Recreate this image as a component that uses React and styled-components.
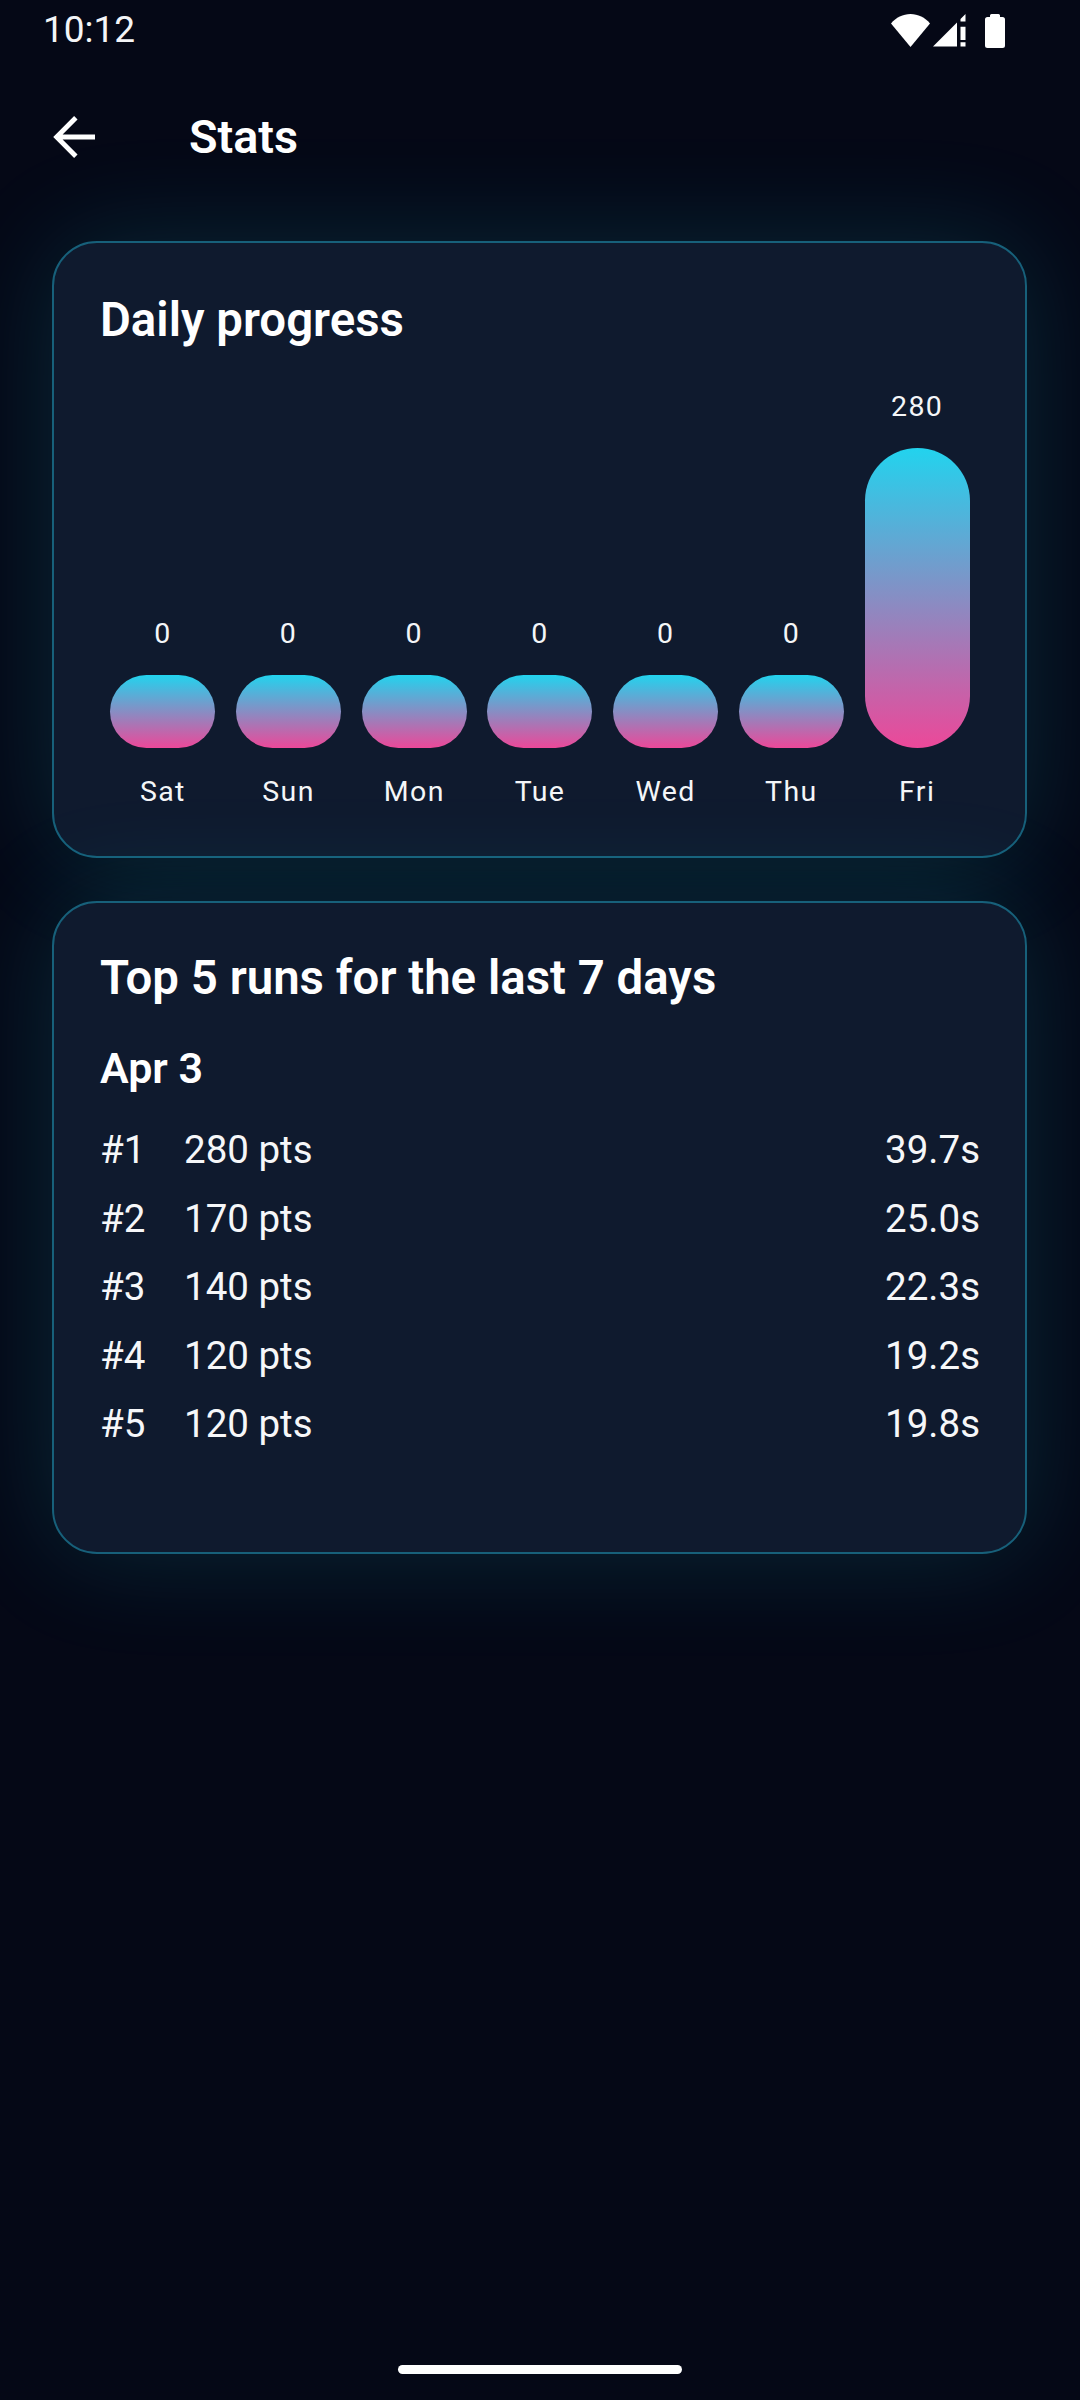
import React from "react";
import styled, { createGlobalStyle } from "styled-components";

const days = [
  { day: "Sat", value: 0 },
  { day: "Sun", value: 0 },
  { day: "Mon", value: 0 },
  { day: "Tue", value: 0 },
  { day: "Wed", value: 0 },
  { day: "Thu", value: 0 },
  { day: "Fri", value: 280 },
];

const runs = [
  { rank: "#1", pts: "280 pts", time: "39.7s" },
  { rank: "#2", pts: "170 pts", time: "25.0s" },
  { rank: "#3", pts: "140 pts", time: "22.3s" },
  { rank: "#4", pts: "120 pts", time: "19.2s" },
  { rank: "#5", pts: "120 pts", time: "19.8s" },
];

export default function App() {
  return (
    <>
      <GlobalStyle />
      <Page>
        <StatusBar>
          <Clock>10:12</Clock>
          <StatusIcons>
            <svg width="39" height="33" viewBox="0 0 39 33">
              <path d="M0 9.5C5 3.5 12 0 19.5 0S34 3.5 39 9.5L19.5 33z" fill="#fff" />
            </svg>
            <svg width="33" height="33" viewBox="0 0 33 33">
              <path
                d="M0 32.5 24 8.5V32.5zM27.5 5 32.5 0V7.5H27.5zM27.5 12.7H32.5V26H27.5zM27.5 28.3H32.5V32.5H27.5z"
                fill="#fff"
              />
            </svg>
            <svg width="20" height="34" viewBox="0 0 20 34">
              <path
                d="M5 1.5A1.5 1.5 0 0 1 6.5 0h7A1.5 1.5 0 0 1 15 1.5V3h2.5A2.5 2.5 0 0 1 20 5.5V31.5A2.5 2.5 0 0 1 17.5 34H2.5A2.5 2.5 0 0 1 0 31.5V5.5A2.5 2.5 0 0 1 2.5 3H5z"
                fill="#fff"
              />
            </svg>
          </StatusIcons>
        </StatusBar>

        <Header>
          <BackIcon width="42" height="42" viewBox="4 4 16 16">
            <path d="M20 12H5.4M12.7 4.7 5.4 12l7.3 7.3" fill="none" stroke="#fff" strokeWidth="1.85" />
          </BackIcon>
          <PageTitle>Stats</PageTitle>
        </Header>

        <Main>
          <ProgressCard>
            <CardTitle>Daily progress</CardTitle>
            <Chart>
              {days.map((d) => (
                <Column key={d.day}>
                  <BarValue>{d.value}</BarValue>
                  <Bar $tall={d.value > 0} />
                  <BarLabel>{d.day}</BarLabel>
                </Column>
              ))}
            </Chart>
          </ProgressCard>

          <RunsCard>
            <CardTitle>Top 5 runs for the last 7 days</CardTitle>
            <DateHeading>Apr 3</DateHeading>
            <RunList>
              {runs.map((r) => (
                <RunRow key={r.rank}>
                  <Rank>{r.rank}</Rank>
                  <Points>{r.pts}</Points>
                  <span>{r.time}</span>
                </RunRow>
              ))}
            </RunList>
          </RunsCard>
        </Main>

        <HomeIndicator />
      </Page>
    </>
  );
}

const GlobalStyle = createGlobalStyle`
  html, body {
    margin: 0;
    padding: 0;
    background: #050816;
  }
  * {
    box-sizing: border-box;
  }
`;

const Page = styled.div`
  width: 1080px;
  height: 2400px;
  display: flex;
  flex-direction: column;
  overflow: hidden;
  background: #050816;
  color: #fff;
  font-family: Roboto, "Liberation Sans", sans-serif;
`;

const StatusBar = styled.div`
  height: 60px;
  padding: 0 75px 0 43px;
  display: flex;
  align-items: center;
  justify-content: space-between;
`;

const Clock = styled.span`
  font-size: 37px;
  line-height: 62px;
  color: #f4f5f7;
`;

const StatusIcons = styled.div`
  display: flex;
  align-items: flex-start;
  gap: 3px;
  margin-top: 2px;

  svg:last-child {
    margin-left: 16px;
  }
`;

const Header = styled.header`
  height: 152px;
  display: flex;
  align-items: center;
  padding: 1px 0 0 53px;
`;

const BackIcon = styled.svg`
  flex: none;
`;

const PageTitle = styled.h1`
  margin: 0 0 0 94px;
  font-size: 46.75px;
  line-height: 56px;
  font-weight: 600;
`;

const Main = styled.main`
  padding: 29px 53px 0 52px;
  display: flex;
  flex-direction: column;
  gap: 43px;
`;

const Card = styled.section`
  border: 2px solid #17607a;
  border-radius: 45px;
  background: #0f1a2e;
  box-shadow: 0 0 110px rgba(34, 211, 238, 0.16);
  padding-left: 46px;
  padding-right: 45px;
`;

const ProgressCard = styled(Card)`
  padding-top: 48.5px;
  padding-bottom: 46px;
`;

const RunsCard = styled(Card)`
  padding-top: 47px;
  padding-bottom: 94px;
`;

const CardTitle = styled.h2`
  margin: 0;
  font-size: 47.4px;
  line-height: 56px;
  font-weight: 600;
`;

const Chart = styled.div`
  margin-top: 41px;
  display: grid;
  grid-template-columns: repeat(7, 1fr);
  align-items: end;
`;

const Column = styled.div`
  display: flex;
  flex-direction: column;
  align-items: center;
`;

const BarValue = styled.span`
  font-size: 28.5px;
  line-height: 36px;
  letter-spacing: 1.4px;
  color: #f4f6f8;
`;

const Bar = styled.div`
  width: 105px;
  height: ${(props) => (props.$tall ? "300px" : "73px")};
  margin-top: 23.5px;
  border-radius: 53px;
  background: linear-gradient(180deg, #22d3ee 0%, #ec4899 100%);
`;

const BarLabel = styled.span`
  margin-top: 26px;
  font-size: 28.5px;
  line-height: 36px;
  letter-spacing: 1.4px;
  color: #f4f6f8;
`;

const DateHeading = styled.h3`
  margin: 37px 0 0;
  font-size: 43px;
  line-height: 50px;
  font-weight: 600;
`;

const RunList = styled.div`
  margin-top: 22.5px;
`;

const RunRow = styled.div`
  height: 68.5px;
  display: flex;
  align-items: center;
  font-size: 38.5px;
  color: #f6f7f9;
`;

const Rank = styled.span`
  width: 84px;
`;

const Points = styled.span`
  flex: 1;
`;

const HomeIndicator = styled.div`
  width: 284px;
  height: 9px;
  margin: auto auto 26px;
  border-radius: 5px;
  background: #fff;
`;
